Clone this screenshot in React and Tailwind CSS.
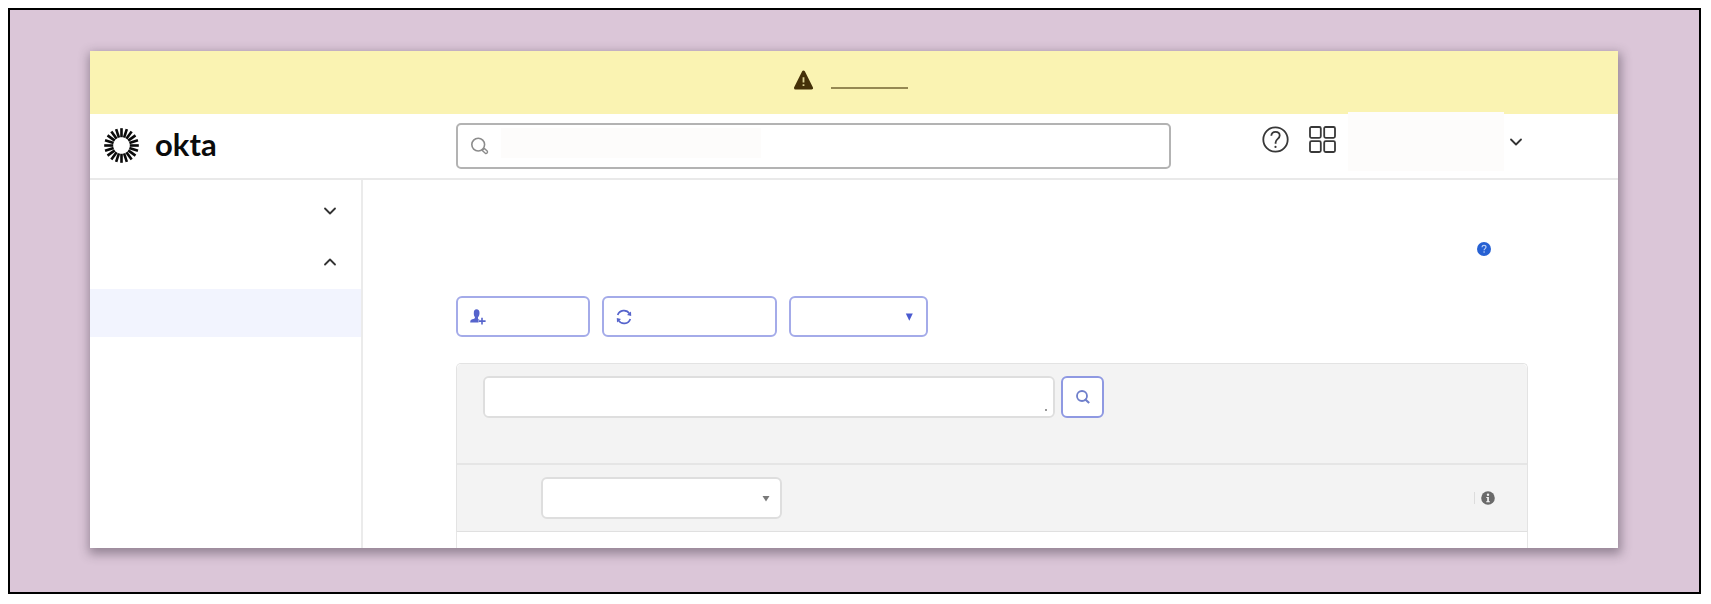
import { ChevronDown, ChevronUp } from "lucide-react";

const LOGO_RAYS = Array.from({ length: 20 }, (_, index) => index * 18);

function OktaLogo() {
  return (
    <a href="#home" className="flex items-center gap-4">
      <svg width="35" height="35" viewBox="0 0 35 35" aria-hidden="true">
        {LOGO_RAYS.map((angle) => (
          <rect
            key={angle}
            x="16.2"
            y="0.2"
            width="2.6"
            height="9"
            fill="#0b0b0b"
            transform={`rotate(${angle} 17.5 17.5)`}
          />
        ))}
      </svg>
      <span className="-mt-1 font-[Lato,sans-serif] text-[31px] leading-8 font-bold text-[#0b0b0b]">okta</span>
    </a>
  );
}

function WarningIcon() {
  return (
    <svg width="20" height="20" viewBox="0 0 20 20" aria-hidden="true">
      <path d="M9.500 2 17.500 18H1.500Z" fill="#443008" stroke="#443008" strokeWidth="3" strokeLinejoin="round" />
      <path d="M9.500 7.200v5.400M9.500 14.200v1.800" stroke="#d9cf93" strokeWidth="1.800" />
    </svg>
  );
}

function MagnifierIcon() {
  return (
    <svg width="18" height="18" viewBox="0 0 18 18" fill="none" stroke="#8c8c8c" strokeWidth="1.600" aria-hidden="true">
      <circle cx="7.200" cy="7.600" r="6.400" />
      <path d="m11.200 13.400 2-2 3 2.600a1.500 1.500 0 0 1-2.100 2.100Z" strokeWidth="1.400" strokeLinejoin="round" />
    </svg>
  );
}

function HelpIcon() {
  return (
    <svg width="27" height="27" viewBox="0 0 27 27" fill="none" stroke="#383838" strokeWidth="1.8" aria-hidden="true">
      <circle cx="13.5" cy="13.5" r="12.2" />
      <path d="M9.3 9.8c.2-2.5 1.8-3.9 4.2-3.9 2.5 0 4.2 1.5 4.2 3.7 0 3.4-4.1 3.2-4.1 7v1.2" />
      <circle cx="13.5" cy="20.9" r="1.1" fill="#383838" stroke="none" />
    </svg>
  );
}

function AppsIcon() {
  return (
    <svg width="27" height="27" viewBox="0 0 27 27" fill="none" stroke="#383838" strokeWidth="1.8" aria-hidden="true">
      <rect x="1" y="1" width="10.8" height="10.8" rx="1.5" />
      <rect x="15.2" y="1" width="10.8" height="10.8" rx="1.5" />
      <rect x="1" y="15.2" width="10.8" height="10.8" rx="1.5" />
      <rect x="15.2" y="15.2" width="10.8" height="10.8" rx="1.5" />
    </svg>
  );
}

function AddPersonIcon() {
  return (
    <svg width="16" height="16" viewBox="0 0 16 16" fill="#5664cc" aria-hidden="true">
      <path d="M6.500.3C8.500.3 9.500 1.600 9.500 4c0 2-.6 3.300-1.500 4.200v1.600l1.500.8v2.900H.2c0-2 .6-2.700 2-3.200 1.500-.5 2.700-.6 2.700-1.500V7.900C4 7 3.800 5.700 3.800 4 3.800 1.600 4.700.3 6.500.3Z" />
      <path d="M12 8.500v7.300M8.400 12.100h7.400" stroke="#fff" strokeWidth="3.200" />
      <path d="M12 8.700v6.900M8.600 12.100h7" stroke="#5664cc" strokeWidth="1.600" />
    </svg>
  );
}

function RefreshIcon() {
  return (
    <svg width="16" height="16" viewBox="0 0 16 16" fill="none" aria-hidden="true">
      <path d="M1.700 6a6.600 6.600 0 0 1 11.800-1.400M14.300 10A6.600 6.600 0 0 1 2.500 11.400" stroke="#5664cc" strokeWidth="1.700" />
      <path d="m15 2.600.2 4.300-4.200-1ZM1 13.400.8 9.100l4.200 1Z" fill="#5664cc" />
    </svg>
  );
}

function SidebarToggle({ label, isOpen = false }) {
  const Icon = isOpen ? ChevronUp : ChevronDown;

  return (
    <button type="button" aria-label={label} aria-expanded={isOpen} className="flex h-[51px] w-full items-center justify-end pr-[21px]">
      <Icon size={20} strokeWidth={2.2} className="text-[#333]" aria-hidden="true" />
    </button>
  );
}

function Sidebar() {
  return (
    <nav aria-label="Main" className="w-[273px] shrink-0 border-r-2 border-[#ebebeb] pt-[5px]">
      <SidebarToggle label="Dashboard" />
      <SidebarToggle label="Directory" isOpen />
      <a href="#people" aria-label="People" className="mt-0.5 block h-12 bg-[#f2f4fe]" />
    </nav>
  );
}

function Header() {
  return (
    <header className="flex h-[66px] items-start border-b-2 border-[#e9e9e9]">
      <div className="w-[366px] shrink-0 pt-[14px] pl-[14px]">
        <OktaLogo />
      </div>
      <label className="mt-[9px] flex h-[46px] min-w-0 flex-1 items-center rounded-[5px] border-2 border-[#b3b3b3] pl-[13px]">
        <MagnifierIcon />
        <input
          type="search"
          aria-label="Search"
          className="mb-1.5 ml-3 h-[30px] w-[260px] bg-[#fdfcfb] px-2 text-base outline-none"
        />
      </label>
      <div className="flex w-[447px] shrink-0 items-start pl-[91px]">
        <button type="button" aria-label="Help" className="mt-[12px] mr-5">
          <HelpIcon />
        </button>
        <button type="button" aria-label="Apps" className="mt-[12px] mr-3">
          <AppsIcon />
        </button>
        <button type="button" aria-label="Account" className="-mt-0.5 flex items-center gap-0.5">
          <span className="h-[59px] w-[156px] bg-[#fdfcfb]" />
          <ChevronDown size={20} strokeWidth={2.2} className="text-[#333]" aria-hidden="true" />
        </button>
      </div>
    </header>
  );
}

function Toolbar() {
  const buttonClassName = "flex h-[41px] items-center rounded-md border-2 border-[#a4abe9] bg-white px-3";

  return (
    <div className="mt-10 flex gap-3">
      <button type="button" aria-label="Add person" className={`${buttonClassName} w-[134px]`}>
        <AddPersonIcon />
      </button>
      <button type="button" aria-label="Reset passwords" className={`${buttonClassName} w-[175px]`}>
        <RefreshIcon />
      </button>
      <button type="button" aria-label="More actions" className={`${buttonClassName} w-[139px] justify-end`}>
        <svg width="9" height="9" viewBox="0 0 9 9" aria-hidden="true">
          <path d="M.8 1.500h7L4.300 8.700Z" fill="#4a5ad0" />
        </svg>
      </button>
    </div>
  );
}

function PeoplePanel() {
  return (
    <section className="mt-[26px] rounded-t-[5px] border border-b-0 border-[#e3e3e3]">
      <div className="flex h-[101px] items-start gap-1.5 rounded-t-[5px] border-b-2 border-[#e5e5e5] bg-[#f3f3f3] pt-3 pl-[26px]">
        <div className="relative flex">
          <textarea
            aria-label="Search people"
            className="h-[42px] w-[572px] resize-none rounded-md border-2 border-[#dedede] bg-white px-3 py-2 text-base outline-none"
          />
          <span className="absolute right-2 bottom-[7px] size-0.5 bg-[#999]" />
        </div>
        <button
          type="button"
          aria-label="Search"
          className="flex h-[42px] w-[43px] items-center justify-center rounded-md border-2 border-[#8f99e2] bg-white"
        >
          <svg width="14" height="14" viewBox="0 0 14 14" fill="none" stroke="#6f7fcb" aria-hidden="true">
            <circle cx="6" cy="6" r="5" strokeWidth="1.800" />
            <path d="m8.800 9 4.400 4" strokeWidth="2.200" />
          </svg>
        </button>
      </div>
      <div className="flex h-[67px] items-center justify-between border-b border-[#e0e0e0] bg-[#f3f3f3] pr-8 pl-[84px]">
        <div className="relative">
          <select
            aria-label="Status"
            className="block h-[42px] w-[241px] appearance-none rounded-md border-2 border-[#dedede] bg-white px-3 text-base outline-none"
          >
            <option aria-label="All" />
          </select>
          <svg width="8" height="7" viewBox="0 0 8 7" className="pointer-events-none absolute top-[18px] right-3" aria-hidden="true">
            <path d="M.5 1h7L4 6.500Z" fill="#7a7a7a" />
          </svg>
        </div>
        <div className="flex items-center gap-1.5">
          <span className="h-3 w-px bg-[#dcdcdc]" />
          <svg width="14" height="14" viewBox="0 0 14 14" aria-hidden="true">
            <circle cx="7" cy="7" r="6.800" fill="#6a6a6a" />
            <circle cx="7" cy="3.700" r="1.200" fill="#f3f3f3" />
            <path d="M5.300 6H7.900v4.200h1v1H5.200v-1h1V7h-.9Z" fill="#f3f3f3" />
          </svg>
        </div>
      </div>
    </section>
  );
}

export default function App() {
  return (
    <div className="bg-white pt-2 pr-[10px] pb-[10px] pl-2 font-['Liberation_Sans',Arial,sans-serif]">
      <div className="border-2 border-black bg-[#dbc6d8] pt-[41px] pr-[81px] pb-11 pl-20">
        <div className="bg-white shadow-[1px_4px_10px_2px_rgba(50,40,55,0.42)]">
          <div className="flex h-[63px] items-start justify-center bg-[#faf3b2] pt-[19px] pr-[6px]">
            <WarningIcon />
            <a href="#details" aria-label="Details" className="ml-[17px] h-[19px] w-[77px] border-b-2 border-[#958852]" />
          </div>
          <Header />
          <div className="flex">
            <Sidebar />
            <main className="flex min-w-0 flex-1 flex-col pt-[62px] pr-[90px] pl-[93px]">
              <a href="#help" aria-label="Help" className="mr-[37px] self-end">
                <svg width="14" height="14" viewBox="0 0 14 14" className="block" aria-hidden="true">
                  <circle cx="7" cy="7" r="7" fill="#2761d3" />
                  <path d="M5 5.200C5.100 3.900 5.900 3.300 7 3.300s2 .7 2 1.800c0 1.500-1.900 1.500-1.900 3.200M7.100 9.300v1.500" fill="none" stroke="#b9cdf5" strokeWidth="1.200" />
                </svg>
              </a>
              <Toolbar />
              <PeoplePanel />
              <div className="h-4 border-x border-[#e6e6e6]" />
            </main>
          </div>
        </div>
      </div>
    </div>
  );
}
